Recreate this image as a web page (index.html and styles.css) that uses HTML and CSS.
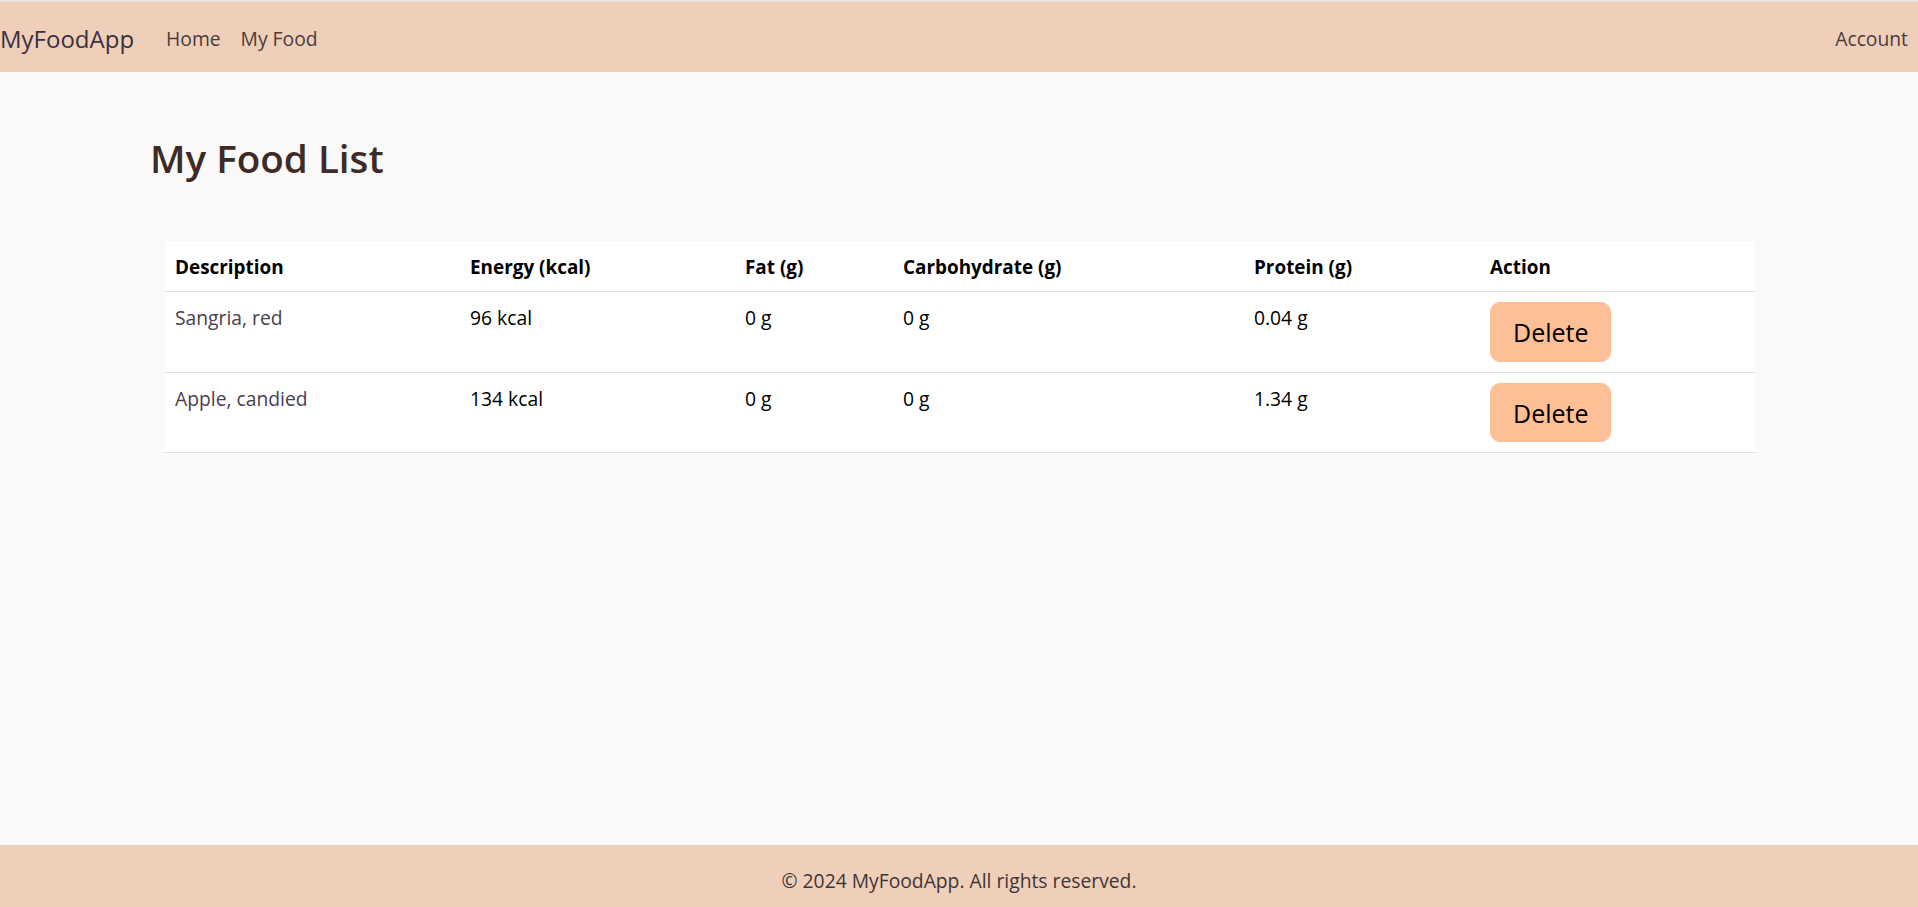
FILE: index.html
```html
<!DOCTYPE html>
<html lang="en">
<head>
<meta charset="utf-8">
<title>MyFoodApp</title>
<link rel="stylesheet" href="styles.css">
</head>
<body>
<header class="navbar">
  <a class="brand" href="#">MyFoodApp</a>
  <nav class="nav">
    <a class="nav-link" href="#">Home</a>
    <a class="nav-link" href="#">My Food</a>
  </nav>
  <nav class="nav nav-right">
    <a class="nav-link" href="#">Account</a>
  </nav>
</header>
<main class="container">
  <h1 class="title">My Food List</h1>
  <div class="table-wrap">
    <table class="food-table">
      <colgroup>
        <col class="col-desc">
        <col class="col-energy">
        <col class="col-fat">
        <col class="col-carb">
        <col class="col-protein">
        <col class="col-action">
      </colgroup>
      <thead>
        <tr>
          <th>Description</th>
          <th>Energy (kcal)</th>
          <th>Fat (g)</th>
          <th>Carbohydrate (g)</th>
          <th>Protein (g)</th>
          <th>Action</th>
        </tr>
      </thead>
      <tbody>
        <tr>
          <td class="desc">Sangria, red</td>
          <td>96 kcal</td>
          <td>0 g</td>
          <td>0 g</td>
          <td>0.04 g</td>
          <td><button class="btn-delete" type="button">Delete</button></td>
        </tr>
        <tr>
          <td class="desc">Apple, candied</td>
          <td>134 kcal</td>
          <td>0 g</td>
          <td>0 g</td>
          <td>1.34 g</td>
          <td><button class="btn-delete" type="button">Delete</button></td>
        </tr>
      </tbody>
    </table>
  </div>
</main>
<footer class="footer">
  <p class="footer-text">© 2024 MyFoodApp. All rights reserved.</p>
</footer>
</body>
</html>
```
FILE: styles.css
```css
* { box-sizing: border-box; }

html, body { height: 100%; }

body {
  margin: 0;
  background: #faf9f7;
  font-family: "Open Sans", "Noto Sans", sans-serif;
  font-size: 19.3px;
  line-height: 1.5;
  color: #212529;
  display: flex;
  flex-direction: column;
  min-height: 100vh;
}

.navbar {
  display: flex;
  align-items: center;
  height: 72px;
  padding-top: 3px;
  border-top: 2px solid #e6e4e2;
  background: #efcfba;
}

.brand {
  font-size: 24px;
  line-height: 37.5px;
  color: #3b3140;
  text-decoration: none;
  margin-right: 22px;
}

.nav {
  display: flex;
}

.nav-right {
  margin-left: auto;
}

.nav-link {
  padding: 10px;
  font-size: 19.3px;
  line-height: 30px;
  color: #4a3c3c;
  text-decoration: none;
}

.container {
  flex: 1;
  width: 1650px;
  margin: 0 auto;
  padding: 0 15px;
}

.title {
  margin: 62px 0 59px;
  padding-left: 1px;
  font-size: 38.6px;
  line-height: 48px;
  font-weight: 600;
  color: #3d2b28;
}

.table-wrap {
  padding: 0 14px 0 16px;
}

.food-table {
  width: 100%;
  border-collapse: collapse;
  table-layout: fixed;
  background: #ffffff;
  vertical-align: top;
}

.col-desc { width: 295px; }
.col-energy { width: 275px; }
.col-fat { width: 158px; }
.col-carb { width: 351px; }
.col-protein { width: 236px; }
.col-action { width: 275px; }

.food-table th,
.food-table td {
  padding: 11px 10px 9px;
  text-align: left;
  vertical-align: top;
  border-bottom: 1px solid #dee2e6;
  line-height: 30px;
  color: #000000;
}

.food-table th {
  font-size: 18.9px;
  font-weight: 700;
}

.food-table td:last-child {
  padding-top: 10px;
  padding-bottom: 10px;
}

.food-table td.desc {
  color: #4a4050;
}

.btn-delete {
  font-family: inherit;
  font-size: 25px;
  line-height: 37.5px;
  padding: 11px 22px 9px;
  border: 1px solid #fdbf96;
  border-radius: 10px;
  background: #fdbf96;
  color: #000000;
  cursor: pointer;
}

.footer {
  height: 62px;
  background: #efcfba;
  text-align: center;
  padding-top: 21px;
}

.footer-text {
  margin: 0;
  font-size: 19.3px;
  line-height: 30px;
  color: #3e3636;
}
```
